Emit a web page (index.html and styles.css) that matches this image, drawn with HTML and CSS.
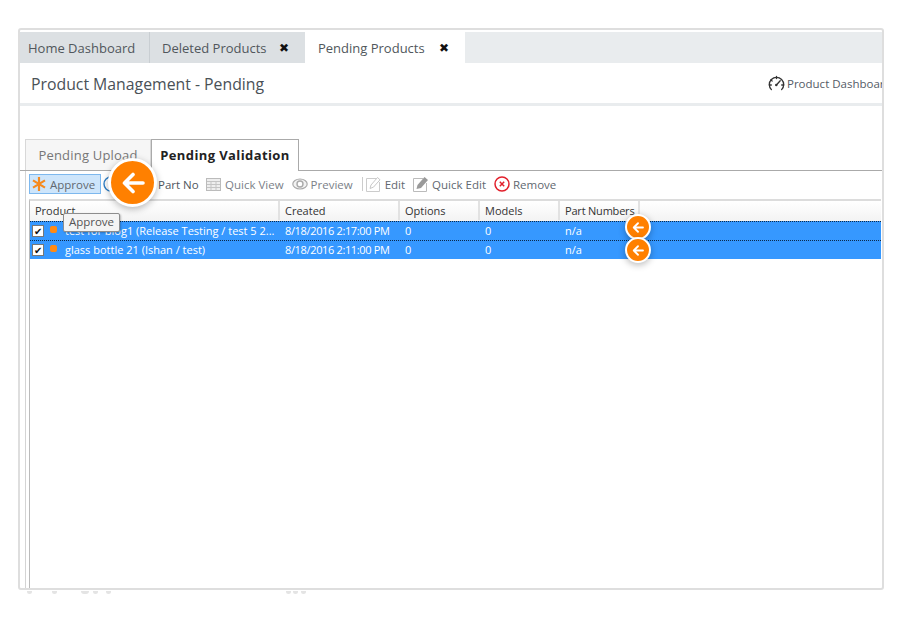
FILE: index.html
```html
<!DOCTYPE html>
<html lang="en">
<head>
<meta charset="utf-8">
<title>Product Management - Pending</title>
<link rel="stylesheet" href="styles.css">
</head>
<body>
<div class="frame">
  <nav class="tabbar">
    <div class="tab tab-home">Home Dashboard</div>
    <div class="tab tab-deleted">Deleted Products<span class="close">✖</span></div>
    <div class="tab tab-active">Pending Products<span class="close close-active">✖</span></div>
  </nav>
  <header class="head">
    <h1 class="title">Product Management - Pending</h1>
    <a class="dash">
      <svg class="gauge" width="17" height="17" viewBox="0 0 17 17"><path d="M3.400 14.600A7.200 7.200 0 1 1 13.600 14.600" fill="none" stroke="#333" stroke-width="1.300" stroke-linecap="round"/><path d="M8.500 1.500v2M2.600 5l1.600 1M1.300 10h2M15.700 10h-2M8.200 10.200l4-4.400" fill="none" stroke="#333" stroke-width="1.300" stroke-linecap="round"/><circle cx="8.300" cy="10" r="1.200" fill="#333"/></svg>
      <span class="dash-text">Product Dashboard</span>
    </a>
  </header>
  <div class="subtabs">
    <div class="subtab">Pending Upload</div>
    <div class="subtab subtab-active">Pending Validation</div>
  </div>
  <div class="panel">
    <div class="toolbar">
      <button class="tool tool-approve">
        <svg width="16" height="16" viewBox="0 0 16 16"><path d="M8 1v14M2 4.400l12 7.200M14 4.400L2 11.600" stroke="#f58a1f" stroke-width="2.200"/></svg>
        Approve
      </button>
      <button class="tool tool-part">
        <svg width="16" height="16" viewBox="0 0 16 16"><circle cx="8" cy="8" r="7" fill="none" stroke="#2f80c8" stroke-width="1.400"/></svg>
        <span class="part-label">Part No</span>
      </button>
      <button class="tool tool-q">
        <svg width="15" height="13" viewBox="0 0 15 13"><rect x=".5" y=".5" width="14" height="12" fill="#eee" stroke="#bbb"/><path d="M1 3.500h13M1 6.500h13M1 9.500h13M5 3.500v9M10 3.500v9" stroke="#c4c4c4"/></svg>
        Quick View
      </button>
      <button class="tool tool-p">
        <svg width="16" height="12" viewBox="0 0 16 12"><ellipse cx="8" cy="6" rx="7.200" ry="5" fill="#f2f2f2" stroke="#aaa" stroke-width="1.200"/><circle cx="8" cy="6" r="3" fill="#fff" stroke="#aaa" stroke-width="1.400"/></svg>
        Preview
      </button>
      <span class="sep"></span>
      <button class="tool tool-e">
        <svg width="16" height="16" viewBox="0 0 16 16"><path d="M11 2.500H.5v13h13V6" fill="#fff" stroke="#ccc"/><path d="M4 12.500l1-3.500 6.500-7.500 2.500 2.300-6.500 7.300z" fill="#fff" stroke="#c8c8c8"/></svg>
        Edit
      </button>
      <button class="tool tool-qe">
        <svg width="16" height="16" viewBox="0 0 16 16"><path d="M10 2.500H.5v13h13V7" fill="#fff" stroke="#bbb"/><path d="M3.500 13l1-4 7-8 3.500 3-7 8z" fill="#9a9a9a"/></svg>
        Quick Edit
      </button>
      <button class="tool tool-r">
        <svg width="16" height="16" viewBox="0 0 16 16"><circle cx="8" cy="8" r="7" fill="#fff" stroke="#e2202c" stroke-width="1.500"/><path d="M5.800 5.800l4.400 4.400M10.200 5.800l-4.400 4.400" stroke="#e2202c" stroke-width="1.500"/></svg>
        Remove
      </button>
    </div>
    <div class="grid">
      <div class="row row-head">
        <div class="cell c-product">Product</div>
        <div class="cell c-created">Created</div>
        <div class="cell c-options">Options</div>
        <div class="cell c-models">Models</div>
        <div class="cell c-parts">Part Numbers</div>
        <div class="cell c-fill"></div>
      </div>
      <div class="row row-sel">
        <div class="cell c-check"><span class="check">✔</span><span class="dot"></span></div>
        <div class="cell c-name">test for blog1 (Release Testing / test 5 2...</div>
        <div class="cell c-created">8/18/2016 2:17:00 PM</div>
        <div class="cell c-options">0</div>
        <div class="cell c-models">0</div>
        <div class="cell c-parts">n/a</div>
        <div class="cell c-fill"></div>
      </div>
      <div class="row row-sel">
        <div class="cell c-check"><span class="check">✔</span><span class="dot"></span></div>
        <div class="cell c-name">glass bottle 21 (Ishan / test)</div>
        <div class="cell c-created">8/18/2016 2:11:00 PM</div>
        <div class="cell c-options">0</div>
        <div class="cell c-models">0</div>
        <div class="cell c-parts">n/a</div>
        <div class="cell c-fill"></div>
      </div>
    </div>
  </div>
</div>
<div class="specks"><i></i><i></i><i></i><i></i><i></i><i></i><i></i><i></i></div>

<div class="tooltip">Approve</div>
<div class="callout callout-lg"><svg width="24" height="22" viewBox="0 0 24 22"><path d="M12 2.500L3.500 11 12 19.500M4 11h18" fill="none" stroke="#fff" stroke-width="3.600" stroke-linecap="round" stroke-linejoin="round"/></svg></div>
<div class="callout callout-sm callout-a"><svg width="12" height="11" viewBox="0 0 24 22"><path d="M12 2.500L3.500 11 12 19.500M4 11h18" fill="none" stroke="#fff" stroke-width="3.600" stroke-linecap="round" stroke-linejoin="round"/></svg></div>
<div class="callout callout-sm callout-b"><svg width="12" height="11" viewBox="0 0 24 22"><path d="M12 2.500L3.500 11 12 19.500M4 11h18" fill="none" stroke="#fff" stroke-width="3.600" stroke-linecap="round" stroke-linejoin="round"/></svg></div>
</body>
</html>
```

FILE: styles.css
```css
* { box-sizing: border-box; }
html, body { margin: 0; height: 100%; background: #fff; overflow: hidden; }
body {
  position: relative;
  padding: 28px 16px 0 18px;
  font-family: "Open Sans", "Noto Sans", sans-serif;
  color: #555;
}
.frame {
  width: 866px;
  height: 562px;
  border: 2px solid #dedede;
  border-radius: 3px;
  background: #fff;
  overflow: hidden;
  padding-top: 2px;
}
.tabbar {
  display: flex;
  height: 31px;
  background: #e9ecee;
}
.tab {
  display: flex;
  align-items: center;
  font-size: 13px;
  color: #51575c;
  background: #dce0e3;
  white-space: nowrap;
}
.tab-home { width: 130px; padding-left: 8px; border-right: 1px solid #c9ced2; }
.tab-deleted { width: 155px; padding-left: 12px; }
.tab-active { width: 160px; padding-left: 13px; background: #fff; }
.close { margin-left: 12px; font-size: 12px; color: #111; }
.close-active { margin-left: 14px; }
.head {
  display: flex;
  justify-content: space-between;
  align-items: center;
  height: 43px;
  padding: 2px 0 0 11px;
  border-bottom: 3px solid #e9ecee;
}
.title { margin: 0; font-size: 15.800px; font-weight: 400; color: #4a5157; }
.dash { display: flex; align-items: center; gap: 2px; width: 114px; overflow: hidden; margin-top: -2px; flex: none; }
.gauge { flex: none; }
.dash-text { font-size: 11.500px; color: #555b66; white-space: nowrap; }
.subtabs {
  display: flex;
  align-items: flex-end;
  height: 65px;
  padding-left: 5px;
  border-bottom: 1px solid #aaa;
}
.subtab {
  width: 126px;
  height: 31px;
  line-height: 31px;
  text-align: center;
  font-size: 13px;
  color: #777;
  background: #f6f6f6;
  border: 1px solid #d8d8d8;
  border-bottom: 0;
  letter-spacing: .2px;
}
.subtab-active {
  width: 148px;
  height: 32px;
  line-height: 31px;
  margin-bottom: -1px;
  font-weight: 700;
  color: #222;
  background: #fff;
  border-color: #aaa;
  letter-spacing: .4px;
}
.panel {
  height: 420px;
  margin-left: 5px;
  border-left: 1px solid #d4d4d4;
  padding-left: 3px;
}
.toolbar {
  display: flex;
  align-items: center;
  height: 28px;
  padding-bottom: 2px;
}
.tool {
  display: flex;
  align-items: center;
  gap: 3px;
  height: 20px;
  padding: 0;
  border: 0;
  background: none;
  font: inherit;
  font-size: 11.500px;
  color: #616870;
  white-space: nowrap;
}
.tool-approve {
  width: 72px;
  padding-left: 1px;
  background: #cde5fb;
  border: 1px solid #7db8ee;
}
.tool-part { margin-left: 2px; width: 103px; }
.part-label { margin-left: 36px; color: #4f565d; }
.tool-q { gap: 4px; color: #7b8188; }
.tool-p { margin-left: 8px; color: #7b8188; }
.sep { width: 1px; height: 14px; margin: 0 3px 0 9px; background: #ccc; }
.tool-qe { margin-left: 8px; }
.tool-r { margin-left: 8px; }
.grid {
  height: 390px;
  margin-right: 1px;
  border-left: 1px solid #bbb;
  border-top: 2px solid #dcdcdc;
}
.row { display: flex; }
.row-head {
  height: 20px;
  padding-bottom: 1px;
  background: linear-gradient(#fff, #f3f3f3);
  font-size: 11px;
  color: #333;
}
.row-sel {
  height: 19px;
  padding-bottom: 1px;
  background: #3698ff;
  color: #fff;
  font-size: 11px;
  border-top: 1px dotted #0b2a4a;
}
.cell {
  display: flex;
  align-items: center;
  white-space: nowrap;
  overflow: hidden;
  padding-left: 5px;
  flex: none;
}
.row-head .cell { border-right: 2px solid #e2e2e2; }
.row-head .c-fill { border: 0; }
.row-head .c-parts { letter-spacing: -.2px; }
.row-sel .c-created { letter-spacing: -.35px; }
.c-product { width: 250px; }
.c-check { width: 34px; padding-left: 2px; }
.c-name { width: 216px; padding-left: 1px; }
.c-created { width: 120px; }
.c-options { width: 80px; }
.c-models { width: 80px; }
.c-parts { width: 80px; }
.c-fill { flex: 1; }
.check {
  width: 12px;
  height: 12px;
  margin-right: 6px;
  background: #fff;
  border: 1px solid #777;
  color: #111;
  font-size: 10px;
  line-height: 10px;
  text-align: center;
}
.dot {
  width: 7px;
  height: 7px;
  margin-top: -3px;
  background: #ff8a14;
  border-radius: 2px;
}
.specks { display: flex; margin: 1px 0 0 9px; height: 5px; }
.specks i { display: block; flex: none; width: 5px; height: 3px; background: #e4e4e4; border-radius: 0 0 3px 3px; }
.specks i:nth-child(2) { margin-left: 20px; }
.specks i:nth-child(3) { margin-left: 24px; width: 8px; }
.specks i:nth-child(4) { margin-left: 4px; }
.specks i:nth-child(5) { margin-left: 8px; }
.specks i:nth-child(6) { margin-left: 175px; }
.specks i:nth-child(7) { margin-left: 2px; }
.specks i:nth-child(8) { margin-left: 3px; }
.tooltip {
  position: absolute;
  left: 63px;
  top: 213px;
  width: 57px;
  height: 19px;
  line-height: 15px;
  text-align: center;
  font-size: 11.500px;
  color: #555;
  background: #f4f4f4;
  border: 1px solid #8d8d8d;
  border-radius: 2px;
  box-shadow: 1px 1px 2px rgba(0,0,0,.25);
}
.callout {
  position: absolute;
  display: flex;
  align-items: center;
  justify-content: center;
  background: #ff8000;
  border: 2px solid #fff;
  border-radius: 50%;
  box-shadow: 0 2px 7px rgba(0,0,0,.28);
}
.callout-lg { left: 108px; top: 158px; width: 49px; height: 49px; border-width: 3px; }
.callout-sm { left: 625px; width: 26px; height: 26px; }
.callout-a { top: 214px; }
.callout-b { top: 237px; }
```
